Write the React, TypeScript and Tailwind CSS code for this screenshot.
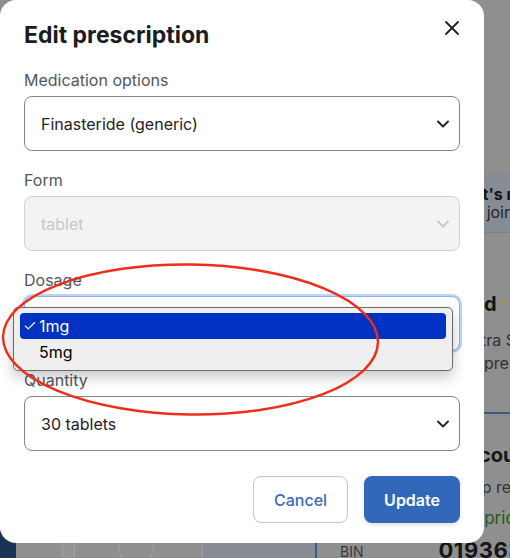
import { Check } from "lucide-react";

const Chevron = ({ color = "#1f2328" }: { color?: string }) => (
  <svg width="12" height="12" viewBox="0 0 12 12" fill="none">
    <path d="M1 3.5L6 8.5L11 3.5" stroke={color} strokeWidth="1.9" strokeLinecap="round" strokeLinejoin="round" />
  </svg>
);

const Field = ({
  label,
  value,
  disabled,
  focused,
  last,
}: {
  label: string;
  value: string;
  disabled?: boolean;
  focused?: boolean;
  last?: boolean;
}) => {
  let box = "border border-[#7b8796] bg-white text-[#222325]";
  if (disabled) box = "border border-[#cdd1dd] bg-[#f3f3f4] text-[#c3c7ce]";
  if (focused) box = "border border-[#8db2ec] bg-white text-[#222325] ring-2 ring-[#bcd4f8]";
  return (
    <div className={last ? "" : "mb-[17px]"}>
      <div className="text-[16px] leading-6 text-[#50575f]">{label}</div>
      <div className={`mt-1 flex h-[55px] items-center justify-between rounded-lg pl-4 pr-[10px] text-[16px] ${box}`}>
        <span>{value}</span>
        <Chevron color={disabled ? "#c3c7ce" : "#1f2328"} />
      </div>
    </div>
  );
};

export default function App() {
  return (
    <div
      className="relative h-[558px] w-[510px] overflow-hidden bg-[#8f8f8f]"
      style={{ fontFamily: "Inter, 'Noto Sans', sans-serif" }}
    >
      {/* page behind the overlay */}
      <div className="flex h-full">
        <div className="flex w-[315px] shrink-0 flex-col justify-end">
          <div className="flex h-[15px] items-start">
            <div className="-ml-[12px] -mt-[12px] h-[40px] w-[28px] shrink-0 rounded-full bg-[#1c3358]" />
            <div className="ml-[46px] h-full w-[13px] shrink-0 border-x border-[#a3a3a3] bg-[#939393]" />
            <div className="ml-[43px] -mt-[10px] h-[30px] w-[36px] shrink-0 rounded-full border border-[#a1a1a1]" />
            <div className="ml-[48px] h-full flex-1 border-l border-[#9a9ea6] bg-[#868b94]" />
          </div>
        </div>
        <div className="flex min-w-0 flex-1 flex-col overflow-hidden whitespace-nowrap">
          <div className="h-[172px] shrink-0" />
          <div className="h-[61px] shrink-0 border-b border-[#7c8088] bg-[#878c94] pt-[13px] pl-[149px]">
            <div className="text-[16px] font-bold leading-[18px] text-[#141414]">Let's refer</div>
            <div className="-ml-[38px] text-[16px] leading-[18px] text-[#232323]">Friends join</div>
          </div>
          <div className="h-[179px] shrink-0 pt-[57px] pl-[85px]">
            <div className="flex items-center text-[20px] font-bold leading-[28px] text-[#141414]">
              Upgraded
              <svg width="18" height="18" viewBox="0 0 16 16" className="ml-[2px]">
                <path d="M6 1 L7.2 5.5 L11.5 6.5 L7.2 7.5 L6 12 L4.8 7.5 L0.5 6.5 L4.8 5.5 Z" fill="#a68d3b" />
                <path d="M12 8 L12.8 10.6 L15.5 11.3 L12.8 12 L12 14.6 L11.2 12 L8.5 11.3 L11.2 10.6 Z" fill="#a68d3b" />
              </svg>
            </div>
            <div className="mt-[11px] pl-[32px] text-[16px] leading-[23px] text-[#2f2f2f]">Get extra $5</div>
            <div className="pl-[84px] text-[16px] leading-[23px] text-[#2f2f2f]">prescription</div>
          </div>
          <div className="flex-1 border-l-2 border-t-2 border-[#3c5784] pt-[31px]">
            <div className="pl-[131px] text-[20px] font-bold leading-[20px] text-[#151515]">Discount</div>
            <div className="mt-[12px] pl-[128px] text-[16px] leading-[20px] text-[#333]">Group rebate</div>
            <div className="mt-[10px] pl-[113px] text-[17px] leading-[22px] text-[#225a1c]">Lower price</div>
            <div className="mt-[9px] flex items-end">
              <span className="pl-[23px] text-[14px] text-[#3a3a3a]">BIN</span>
              <span className="ml-[75px] text-[22px] font-bold leading-[24px] tracking-wide text-[#151515]">019363</span>
            </div>
          </div>
        </div>
      </div>

      {/* modal */}
      <div className="absolute left-0 top-0 w-[484px] rounded-2xl bg-white px-6 pt-[19px] pb-5">
        <div className="flex h-8 items-center justify-between">
          <h2 className="text-[23px] font-bold leading-8 text-[#1b1c1e]">Edit prescription</h2>
          <svg width="14" height="14" viewBox="0 0 14 14" className="mr-[1px] -mt-[14px]">
            <path d="M1 1L13 13M13 1L1 13" stroke="#1f1f1f" strokeWidth="1.8" strokeLinecap="round" />
          </svg>
        </div>
        <div className="mt-[17px]">
          <Field label="Medication options" value="Finasteride (generic)" />
          <Field label="Form" value="tablet" disabled />
          <Field label="Dosage" value="1mg" focused />
          <Field label="Quantity" value="30 tablets" last />
        </div>
        <div className="mt-[25px] flex justify-end gap-4">
          <button className="h-[47px] rounded-lg border border-[#bac5df] bg-white px-5 text-[16px] font-medium text-[#3a6abd]">
            Cancel
          </button>
          <button className="h-[47px] rounded-lg bg-[#3168b9] px-5 text-[16px] font-semibold text-white shadow-[0_2px_4px_rgba(0,0,0,0.12)]">
            Update
          </button>
        </div>
      </div>

      {/* native dropdown */}
      <div className="absolute left-[13px] top-[307px] w-[440px] rounded-[5px] border border-[#6a6a6a] bg-[#efefef] px-[6px] py-[5px] text-[16px] text-black shadow-[0_6px_14px_rgba(0,0,0,0.22)]">
        <div className="flex h-[26px] items-center rounded-[4px] bg-[#0132c2] pl-[3px] text-white">
          <Check size={14} strokeWidth={2} className="mr-[2px]" />
          1mg
        </div>
        <div className="flex h-[26px] items-center pl-[19px]">5mg</div>
      </div>

      {/* annotation */}
      <svg className="pointer-events-none absolute left-0 top-0" width="510" height="558">
        <ellipse cx="190.5" cy="339.5" rx="187.5" ry="75" transform="rotate(0.8 190.5 339.5)" fill="none" stroke="#ef2d19" strokeWidth="2.4" />
      </svg>
    </div>
  );
}
